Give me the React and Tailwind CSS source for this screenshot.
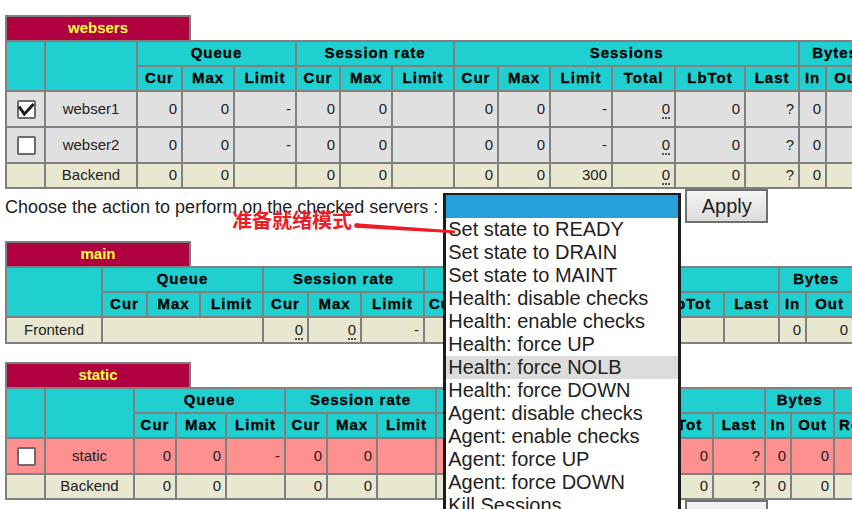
import React from "react";

const cell = "border-2 border-[#808080] px-[4px] py-0 whitespace-nowrap";

function Th({ children, rowSpan, colSpan }) {
  return (
    <th
      rowSpan={rowSpan}
      colSpan={colSpan}
      className={`${cell} text-center text-[15px] font-bold tracking-[1px] text-black [-webkit-text-stroke:0.3px_#000]`}
    >
      {children}
    </th>
  );
}

function Td({ children, center, colSpan }) {
  return (
    <td colSpan={colSpan} className={`${cell} ${center ? "text-center" : "text-right"}`}>
      {children}
    </td>
  );
}

// dotted underline used for values with a tooltip
function U({ children }) {
  return <span className="inline-block border-b-2 border-dotted border-[#555] leading-[16px]">{children}</span>;
}

function Check({ checked }) {
  return (
    <span className="relative inline-block h-[19px] w-[19px] rounded-[2px] border-2 border-[#6b6b6b] bg-white align-middle">
      {checked && (
        <svg viewBox="0 0 19 19" className="absolute -left-[2px] -top-[2px] h-[19px] w-[19px]">
          <path d="M2 6.5 L7.3 14.2 L16.6 4" fill="none" stroke="#1e1e1e" strokeWidth="3" />
        </svg>
      )}
    </span>
  );
}

function CheckCell({ checked }) {
  return (
    <td className="border-2 border-[#808080] py-0 pl-[10px] text-left">
      <Check checked={checked} />
    </td>
  );
}

function PxName({ name }) {
  return (
    <div className="flex h-[25px] w-[186px] items-center justify-center border-2 border-b-0 border-[#808080] bg-[#b00040] text-[15px] font-bold text-[#ffff40]">
      {name}
    </div>
  );
}

const options = [
  "Set state to READY",
  "Set state to DRAIN",
  "Set state to MAINT",
  "Health: disable checks",
  "Health: enable checks",
  "Health: force UP",
  "Health: force NOLB",
  "Health: force DOWN",
  "Agent: disable checks",
  "Agent: enable checks",
  "Agent: force UP",
  "Agent: force DOWN",
  "Kill Sessions",
];

function ActionRow({ open }) {
  return (
    <div className="flex h-[37px] items-center">
      <span className="text-[18px] leading-[21px]">Choose the action to perform on the checked servers :</span>
      <div className="relative ml-[5px] mt-[4px] h-[24px] w-[238px] self-start border border-[#767676] bg-white">
        {open && (
          <div className="absolute -left-px -top-px z-10 h-[330px] w-[238px] border-[3px] border-t-2 border-[#1c1c1c] bg-white text-[20px] leading-[23px] text-[#222]">
            <div className="h-[23px] bg-[#26a0da]"></div>
            {options.map((o) => (
              <div key={o} className={`h-[23px] pl-[2px] ${o === "Health: force NOLB" ? "bg-[#dcdcdc]" : ""}`}>
                {o}
              </div>
            ))}
          </div>
        )}
      </div>
      <button className="ml-[4px] h-[34px] w-[83px] self-start border-2 border-[#707070] bg-gradient-to-b from-[#f4f4f4] to-[#dcdcdc] text-[20px] text-[#222]">
        Apply
      </button>
    </div>
  );
}

export default function App() {
  return (
    <div className="relative h-[509px] w-[852px] overflow-hidden bg-white font-['Liberation_Sans',Arial,sans-serif] text-[15px] text-[#222]">
      <div className="pl-[5px] pt-[15px]">
        {/* websers */}
        <PxName name="websers" />
        <table className="w-[905px] table-fixed border-collapse">
          <colgroup>
            <col className="w-[39px]" />
            <col className="w-[92px]" />
            <col className="w-[45px]" />
            <col className="w-[52px]" />
            <col className="w-[62px]" />
            <col className="w-[44px]" />
            <col className="w-[52px]" />
            <col className="w-[62px]" />
            <col className="w-[44px]" />
            <col className="w-[52px]" />
            <col className="w-[62px]" />
            <col className="w-[63px]" />
            <col className="w-[70px]" />
            <col className="w-[54px]" />
            <col className="w-[27px]" />
            <col className="w-[45px]" />
            <col className="w-[40px]" />
          </colgroup>
          <thead>
            <tr className="h-[25px] bg-[#20d0d0]">
              <Th rowSpan={2} />
              <Th rowSpan={2} />
              <Th colSpan={3}>Queue</Th>
              <Th colSpan={3}>Session rate</Th>
              <Th colSpan={6}>Sessions</Th>
              <Th colSpan={2}>Bytes</Th>
              <Th />
            </tr>
            <tr className="h-[25px] bg-[#20d0d0]">
              <Th>Cur</Th>
              <Th>Max</Th>
              <Th>Limit</Th>
              <Th>Cur</Th>
              <Th>Max</Th>
              <Th>Limit</Th>
              <Th>Cur</Th>
              <Th>Max</Th>
              <Th>Limit</Th>
              <Th>Total</Th>
              <Th>LbTot</Th>
              <Th>Last</Th>
              <Th>In</Th>
              <Th>Out</Th>
              <Th>Req</Th>
            </tr>
          </thead>
          <tbody>
            {["webser1", "webser2"].map((s, i) => (
              <tr key={s} className="h-[36px] bg-[#e0e0e0]">
                <CheckCell checked={i === 0} />
                <Td center>{s}</Td>
                <Td>0</Td>
                <Td>0</Td>
                <Td>-</Td>
                <Td>0</Td>
                <Td>0</Td>
                <Td></Td>
                <Td>0</Td>
                <Td>0</Td>
                <Td>-</Td>
                <Td>
                  <U>0</U>
                </Td>
                <Td>0</Td>
                <Td>?</Td>
                <Td>0</Td>
                <Td>0</Td>
                <Td>0</Td>
              </tr>
            ))}
            <tr className="h-[25px] bg-[#e8e8d0]">
              <Td></Td>
              <Td center>Backend</Td>
              <Td>0</Td>
              <Td>0</Td>
              <Td></Td>
              <Td>0</Td>
              <Td>0</Td>
              <Td></Td>
              <Td>0</Td>
              <Td>0</Td>
              <Td>300</Td>
              <Td>
                <U>0</U>
              </Td>
              <Td>0</Td>
              <Td>?</Td>
              <Td>0</Td>
              <Td>0</Td>
              <Td>0</Td>
            </tr>
          </tbody>
        </table>
        <ActionRow open />

        {/* main */}
        <div className="mt-[15px]">
          <PxName name="main" />
          <table className="w-[887px] table-fixed border-collapse">
            <colgroup>
              <col className="w-[96px]" />
              <col className="w-[45px]" />
              <col className="w-[53px]" />
              <col className="w-[63px]" />
              <col className="w-[45px]" />
              <col className="w-[53px]" />
              <col className="w-[63px]" />
              <col className="w-[36px]" />
              <col className="w-[53px]" />
              <col className="w-[63px]" />
              <col className="w-[77px]" />
              <col className="w-[71px]" />
              <col className="w-[55px]" />
              <col className="w-[27px]" />
              <col className="w-[47px]" />
              <col className="w-[40px]" />
            </colgroup>
            <thead>
              <tr className="h-[25px] bg-[#20d0d0]">
                <Th rowSpan={2} />
                <Th colSpan={3}>Queue</Th>
                <Th colSpan={3}>Session rate</Th>
                <Th colSpan={6}>Sessions</Th>
                <Th colSpan={2}>Bytes</Th>
                <Th />
              </tr>
              <tr className="h-[25px] bg-[#20d0d0]">
                <Th>Cur</Th>
                <Th>Max</Th>
                <Th>Limit</Th>
                <Th>Cur</Th>
                <Th>Max</Th>
                <Th>Limit</Th>
                <Th>Cur</Th>
                <Th>Max</Th>
                <Th>Limit</Th>
                <Th>Total</Th>
                <Th>LbTot</Th>
                <Th>Last</Th>
                <Th>In</Th>
                <Th>Out</Th>
                <Th>Req</Th>
              </tr>
            </thead>
            <tbody>
              <tr className="h-[26px] bg-[#e8e8d0]">
                <Td center>Frontend</Td>
                <Td colSpan={3}></Td>
                <Td>
                  <U>0</U>
                </Td>
                <Td>
                  <U>0</U>
                </Td>
                <Td>-</Td>
                <Td>0</Td>
                <Td>0</Td>
                <Td>3000</Td>
                <Td>
                  <U>0</U>
                </Td>
                <Td></Td>
                <Td></Td>
                <Td>0</Td>
                <Td>0</Td>
                <Td>0</Td>
              </tr>
            </tbody>
          </table>
        </div>

        {/* static */}
        <div className="mt-[18px]">
          <PxName name="static" />
          <table className="w-[918px] table-fixed border-collapse">
            <colgroup>
              <col className="w-[39px]" />
              <col className="w-[89px]" />
              <col className="w-[42px]" />
              <col className="w-[50px]" />
              <col className="w-[59px]" />
              <col className="w-[42px]" />
              <col className="w-[50px]" />
              <col className="w-[59px]" />
              <col className="w-[42px]" />
              <col className="w-[50px]" />
              <col className="w-[58px]" />
              <col className="w-[60px]" />
              <col className="w-[67px]" />
              <col className="w-[52px]" />
              <col className="w-[26px]" />
              <col className="w-[43px]" />
              <col className="w-[40px]" />
              <col className="w-[50px]" />
            </colgroup>
            <thead>
              <tr className="h-[25px] bg-[#20d0d0]">
                <Th rowSpan={2} />
                <Th rowSpan={2} />
                <Th colSpan={3}>Queue</Th>
                <Th colSpan={3}>Session rate</Th>
                <Th colSpan={6}>Sessions</Th>
                <Th colSpan={2}>Bytes</Th>
                <Th colSpan={2} />
              </tr>
              <tr className="h-[25px] bg-[#20d0d0]">
                <Th>Cur</Th>
                <Th>Max</Th>
                <Th>Limit</Th>
                <Th>Cur</Th>
                <Th>Max</Th>
                <Th>Limit</Th>
                <Th>Cur</Th>
                <Th>Max</Th>
                <Th>Limit</Th>
                <Th>Total</Th>
                <Th>LbTot</Th>
                <Th>Last</Th>
                <Th>In</Th>
                <Th>Out</Th>
                <Th>Req</Th>
                <Th>Resp</Th>
              </tr>
            </thead>
            <tbody>
              <tr className="h-[36px] bg-[#ff9090]">
                <CheckCell />
                <Td center>static</Td>
                <Td>0</Td>
                <Td>0</Td>
                <Td>-</Td>
                <Td>0</Td>
                <Td>0</Td>
                <Td></Td>
                <Td>0</Td>
                <Td>0</Td>
                <Td>-</Td>
                <Td>
                  <U>0</U>
                </Td>
                <Td>0</Td>
                <Td>?</Td>
                <Td>0</Td>
                <Td>0</Td>
                <Td></Td>
                <Td></Td>
              </tr>
              <tr className="h-[25px] bg-[#e8e8d0]">
                <Td></Td>
                <Td center>Backend</Td>
                <Td>0</Td>
                <Td>0</Td>
                <Td></Td>
                <Td>0</Td>
                <Td>0</Td>
                <Td></Td>
                <Td>0</Td>
                <Td>0</Td>
                <Td>300</Td>
                <Td>
                  <U>0</U>
                </Td>
                <Td>0</Td>
                <Td>?</Td>
                <Td>0</Td>
                <Td>0</Td>
                <Td></Td>
                <Td></Td>
              </tr>
            </tbody>
          </table>
        </div>
        <ActionRow />
      </div>

      {/* red annotation */}
      <div className="pointer-events-none absolute left-[232px] top-[210px] z-20 font-['Noto_Sans_CJK_SC','Noto_Sans',sans-serif] text-[20px] font-bold leading-[20px] text-[#ee1c25]">
        准备就绪模式
      </div>
      <svg className="pointer-events-none absolute left-0 top-0 z-20 h-[509px] w-[852px]" viewBox="0 0 852 509">
        <path d="M356 223.2 L455 230.6 L455 233.2 L356 227.8 Z" fill="#ee1c25" />
        <circle cx="356.5" cy="225.5" r="2.3" fill="#ee1c25" />
      </svg>
    </div>
  );
}
